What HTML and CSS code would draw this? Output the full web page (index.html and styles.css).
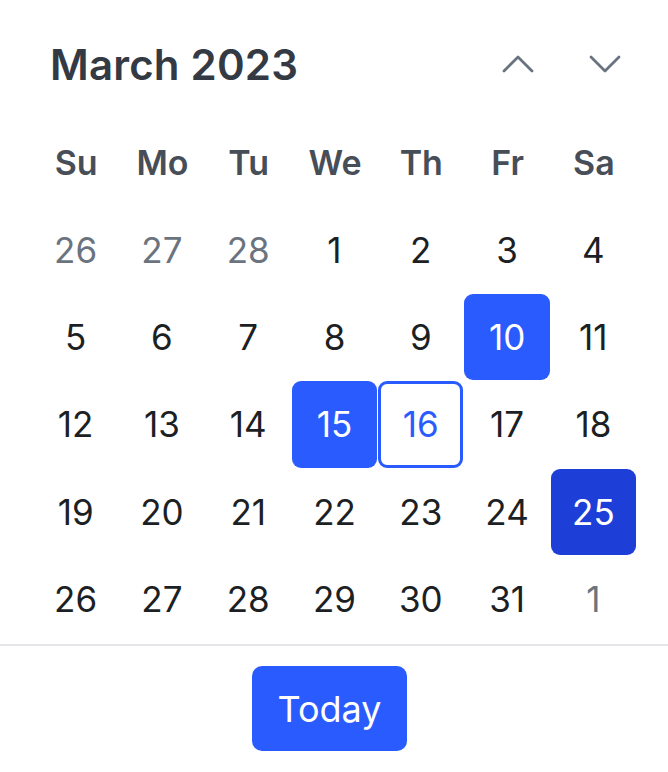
FILE: index.html
```html
<!DOCTYPE html>
<html lang="en">
<head>
<meta charset="utf-8">
<title>Calendar</title>
<link rel="stylesheet" href="styles.css">
</head>
<body>
<div class="calendar">
  <div class="cal-head">
    <h2 class="cal-title">March 2023</h2>
    <div class="cal-nav">
      <button class="nav-btn" aria-label="Previous month">
        <svg width="32" height="20" viewBox="0 0 32 20"><path d="M2 17 L16 3 L30 17" fill="none" stroke="#68737f" stroke-width="2.8" stroke-linecap="round" stroke-linejoin="round"/></svg>
      </button>
      <button class="nav-btn" aria-label="Next month">
        <svg width="32" height="20" viewBox="0 0 32 20"><path d="M2 3 L16 17 L30 3" fill="none" stroke="#68737f" stroke-width="2.8" stroke-linecap="round" stroke-linejoin="round"/></svg>
      </button>
    </div>
  </div>

  <div class="cal-grid">
    <div class="wd">Su</div><div class="wd">Mo</div><div class="wd">Tu</div><div class="wd">We</div><div class="wd">Th</div><div class="wd">Fr</div><div class="wd">Sa</div>

    <div class="day muted">26</div><div class="day muted">27</div><div class="day muted">28</div><div class="day">1</div><div class="day">2</div><div class="day">3</div><div class="day">4</div>
    <div class="day">5</div><div class="day">6</div><div class="day">7</div><div class="day">8</div><div class="day">9</div><div class="day sel">10</div><div class="day">11</div>
    <div class="day">12</div><div class="day">13</div><div class="day">14</div><div class="day sel">15</div><div class="day today">16</div><div class="day">17</div><div class="day">18</div>
    <div class="day">19</div><div class="day">20</div><div class="day">21</div><div class="day">22</div><div class="day">23</div><div class="day">24</div><div class="day sel dark">25</div>
    <div class="day">26</div><div class="day">27</div><div class="day">28</div><div class="day">29</div><div class="day">30</div><div class="day">31</div><div class="day muted">1</div>
  </div>

  <div class="cal-foot">
    <button class="today-btn">Today</button>
  </div>
</div>
</body>
</html>
```

FILE: styles.css
```css
*{box-sizing:border-box;}
body{margin:0;background:#fff;font-family:Inter,"Noto Sans",sans-serif;color:#1f2328;}
.calendar{width:668px;}

.cal-head{height:119px;display:flex;align-items:center;justify-content:space-between;padding:9px 47px 0 50px;}
.cal-title{margin:0;font-size:42px;font-weight:600;color:#343a43;letter-spacing:0.2px;}
.cal-nav{display:flex;gap:55px;}
.nav-btn{border:0;background:none;padding:0;width:32px;height:20px;display:flex;}

.cal-grid{margin:0 31px 0 33px;display:grid;grid-template-columns:repeat(7,1fr);grid-auto-rows:87.4px;}
.wd,.day{display:flex;align-items:center;justify-content:center;font-size:35px;}
.wd{font-weight:600;color:#474e57;font-size:34px;}
.day{color:#1c1f23;border-radius:9px;margin:0 1px 1px 0;}
.day.muted{color:#6b747e;}
.day.sel{background:#2a5bfe;color:#fff;}
.day.sel.dark{background:#1d3fd8;}
.day.today{border:3px solid #2a5bfe;color:#2a5bfe;}

.cal-foot{border-top:2px solid #e4e6ea;margin-top:1px;padding:20px 9px 20px 0;display:flex;justify-content:center;}
.today-btn{border:0;background:#2a5bfe;color:#fff;font-family:inherit;font-size:36px;width:155px;height:85px;border-radius:10px;padding:0;}
```
